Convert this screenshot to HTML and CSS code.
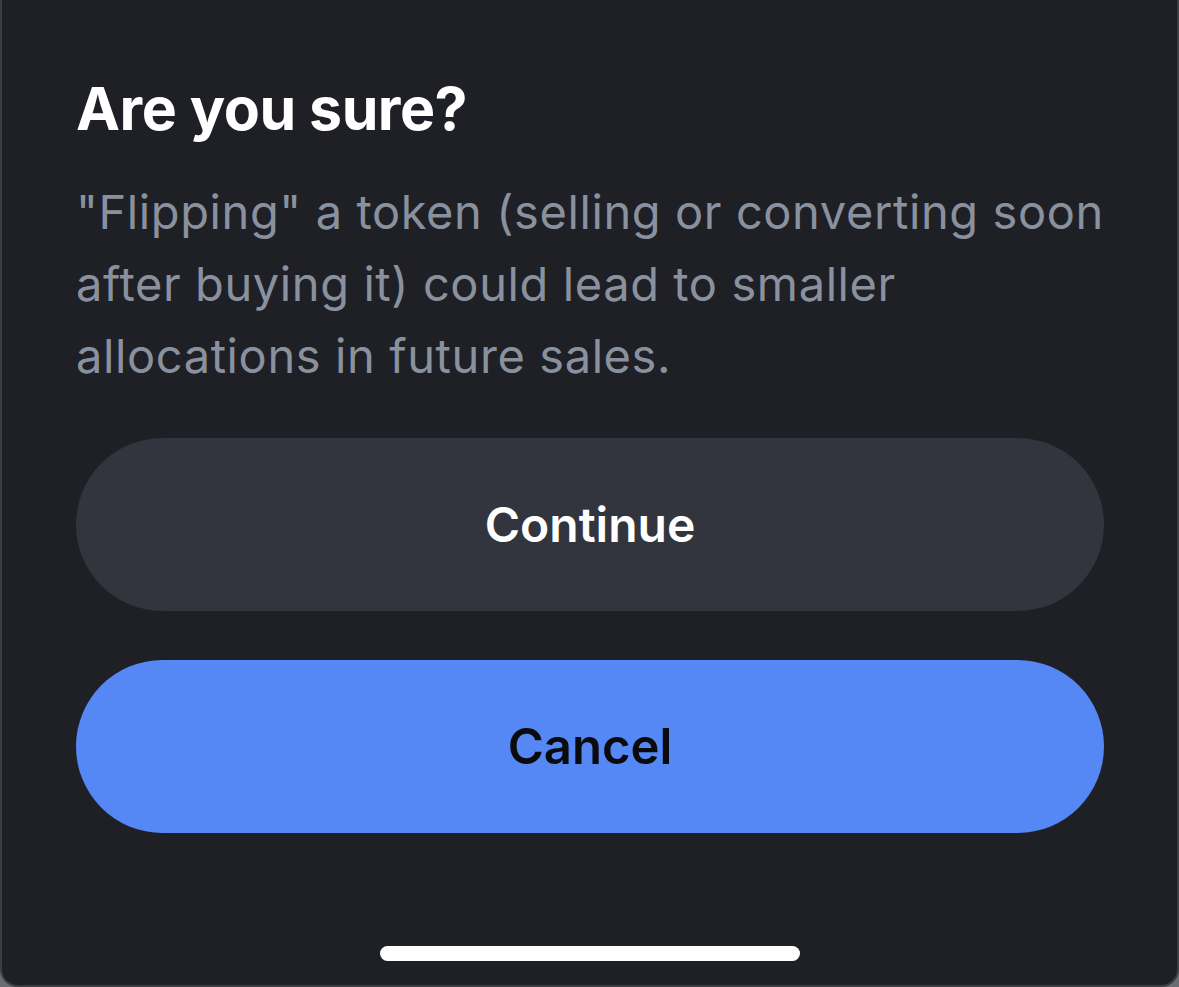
FILE: index.html
```html
<!DOCTYPE html>
<html lang="en">
<head>
<meta charset="utf-8">
<title>Are you sure?</title>
<link rel="stylesheet" href="styles.css">
</head>
<body>
<div class="sheet">
  <div class="content">
    <h1 class="title">Are you sure?</h1>
    <p class="message">"Flipping" a token (selling or converting soon after buying it) could lead to smaller allocations in future sales.</p>
    <div class="actions">
      <button class="btn btn-secondary">Continue</button>
      <button class="btn btn-primary">Cancel</button>
    </div>
  </div>
  <div class="home-bar"></div>
</div>
</body>
</html>
```
FILE: styles.css
```css
html, body {
  margin: 0;
  padding: 0;
  height: 100%;
}
body {
  background: #6b6d73;
  font-family: Inter, "Noto Sans", sans-serif;
  overflow: hidden;
}
.sheet {
  box-sizing: border-box;
  height: 987px;
  background: #1f2026;
  border: 2px solid #3a3d45;
  border-top: none;
  border-radius: 0 0 18px 18px;
  display: flex;
  flex-direction: column;
  justify-content: space-between;
  align-items: center;
  padding: 0 0 24px;
}
.content {
  box-sizing: border-box;
  width: 100%;
  padding: 73px 73px 0 74px;
}
.title {
  margin: 0;
  color: #ffffff;
  font-size: 59px;
  font-weight: 700;
  line-height: 72px;
  letter-spacing: -0.5px;
}
.message {
  margin: 31px 0 0;
  color: #8a919e;
  font-size: 47px;
  font-weight: 400;
  line-height: 72px;
  letter-spacing: 0.6px;
}
.actions {
  margin-top: 46px;
  display: flex;
  flex-direction: column;
  gap: 49px;
}
.btn {
  height: 173px;
  border: none;
  border-radius: 87px;
  font-family: Inter, "Noto Sans", sans-serif;
  font-size: 48px;
  font-weight: 600;
  width: 100%;
}
.btn-secondary {
  background: #32353d;
  color: #ffffff;
}
.btn-primary {
  background: #5588f5;
  color: #0a0b0d;
  font-size: 49px;
}
.home-bar {
  width: 420px;
  height: 15px;
  border-radius: 8px;
  background: #ffffff;
}
```
